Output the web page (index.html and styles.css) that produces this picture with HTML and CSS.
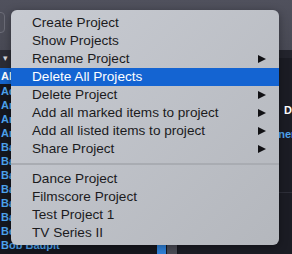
FILE: index.html
```html
<!DOCTYPE html>
<html lang="en">
<head>
    <meta charset="UTF-8">
    <title>Projects menu</title>
    <link rel="stylesheet" href="styles.css">
</head>
<body>
    <div class="window">
        <div class="toolbar">
            <div class="tool_button"></div>
        </div>
        <div class="browser">
            <div class="list">
                <div class="list_header"><span class="sort">&#9662;</span></div>
                <div class="list_item selected">All Projects</div>
                <div class="list_item">Adagio</div>
                <div class="list_item">Andante</div>
                <div class="list_item">Anthem</div>
                <div class="list_item">Angel Song</div>
                <div class="list_item">Ballad</div>
                <div class="list_item">Bamboo</div>
                <div class="list_item">Band Take</div>
                <div class="list_item">Basic Loop</div>
                <div class="list_item">Bass Line</div>
                <div class="list_item">Batucada</div>
                <div class="list_item">Bebop</div>
                <div class="list_item">Bob Baupit</div>
            </div>
            <div class="strip">
                <div class="strip_buttons">
                    <span class="strip_blue"></span>
                    <span class="strip_grey"></span>
                </div>
            </div>
            <div class="details">
                <div class="details_header"></div>
                <div class="details_title">Details</div>
                <div class="details_owner">Planner</div>
                <div class="details_line"></div>
            </div>
        </div>

        <!-- контекстное меню поверх окна -->
        <div class="menu">
            <div class="menu_item">Create Project</div>
            <div class="menu_item">Show Projects</div>
            <div class="menu_item has_sub">Rename Project</div>
            <div class="menu_item active">Delete All Projects</div>
            <div class="menu_item has_sub">Delete Project</div>
            <div class="menu_item has_sub">Add all marked items to project</div>
            <div class="menu_item has_sub">Add all listed items to project</div>
            <div class="menu_item has_sub">Share Project</div>
            <div class="menu_separator"></div>
            <div class="menu_item">Dance Project</div>
            <div class="menu_item">Filmscore Project</div>
            <div class="menu_item">Test Project 1</div>
            <div class="menu_item">TV Series II</div>
        </div>
    </div>
</body>
</html>
```

FILE: styles.css
```css
body {
    margin: 0;
    padding: 0;
    background-color: #1a1b22;
    font-family: 'Liberation Sans', Arial, sans-serif;
}

.window {
    position: relative;
    width: 292px;
    height: 254px;
    overflow: hidden;
}

.toolbar {
    height: 50px;
    padding-top: 12px;
    box-sizing: border-box;
    background: linear-gradient(#50515d, #484954);
}

.tool_button {
    width: 24px;
    height: 19px;
    margin-left: -21px;
    border: 1px solid #6b6c77;
    border-radius: 4px;
    background-color: #4e4f5a;
}

.browser {
    display: flex;
    height: 204px;
}

.list {
    width: 157px;
    background-color: #16171e;
    overflow: hidden;
}

.list_header {
    height: 18px;
    background-color: #2b2c35;
    color: #d8d8dc;
    font-size: 9px;
    line-height: 17px;
    padding-left: 3px;
}

.list_item {
    height: 14px;
    line-height: 14px;
    padding-left: 1px;
    color: #4ea4ee;
    font-size: 11px;
    font-weight: bold;
    white-space: nowrap;
}

.list_item.selected {
    height: 16px;
    line-height: 16px;
    background-color: #1565cc;
    color: #ffffff;
}

.strip {
    width: 21px;
    display: flex;
    flex-direction: column;
    justify-content: flex-end;
    background-color: #16171e;
}

.strip_buttons {
    display: flex;
    gap: 1px;
    height: 10px;
}

.strip_blue {
    width: 9px;
    background-color: #2f80d8;
}

.strip_grey {
    width: 10px;
    background-color: #4a4b55;
}

.details {
    flex: 1;
    background-color: #1b1c24;
    white-space: nowrap;
    overflow: hidden;
}

.details_header {
    height: 8px;
    background-color: #23242d;
}

.details_title {
    margin-top: 45px;
    padding-left: 106px;
    color: #ffffff;
    font-size: 11px;
    font-weight: bold;
    line-height: 14px;
}

.details_owner {
    margin-top: 10px;
    padding-left: 77px;
    color: #4ea4ee;
    font-size: 11px;
    font-weight: bold;
    line-height: 14px;
}

.details_line {
    margin-top: 51px;
    height: 1px;
    background-color: #2d2e38;
}

/* меню */
.menu {
    position: absolute;
    left: 11px;
    top: 10px;
    width: 268px;
    padding: 4px 0 3px;
    border-radius: 6px;
    background: linear-gradient(135deg, #c8cbd2, #b4b7bd);
    box-shadow: 0 2px 8px rgba(0, 0, 0, 0.35);
    font-size: 13.6px;
    color: #1b1b1d;
}

.menu_item {
    position: relative;
    height: 18px;
    line-height: 18px;
    padding-left: 21px;
    white-space: nowrap;
}

.menu_item.active {
    background-color: #1464d2;
    color: #ffffff;
}

.menu_item.has_sub::after {
    content: "";
    position: absolute;
    right: 13px;
    top: 5px;
    border-left: 8px solid #111114;
    border-top: 4.5px solid transparent;
    border-bottom: 4.5px solid transparent;
}

.menu_separator {
    height: 2px;
    margin: 5px 0 5px;
    background-color: #a9acb2;
}
```
